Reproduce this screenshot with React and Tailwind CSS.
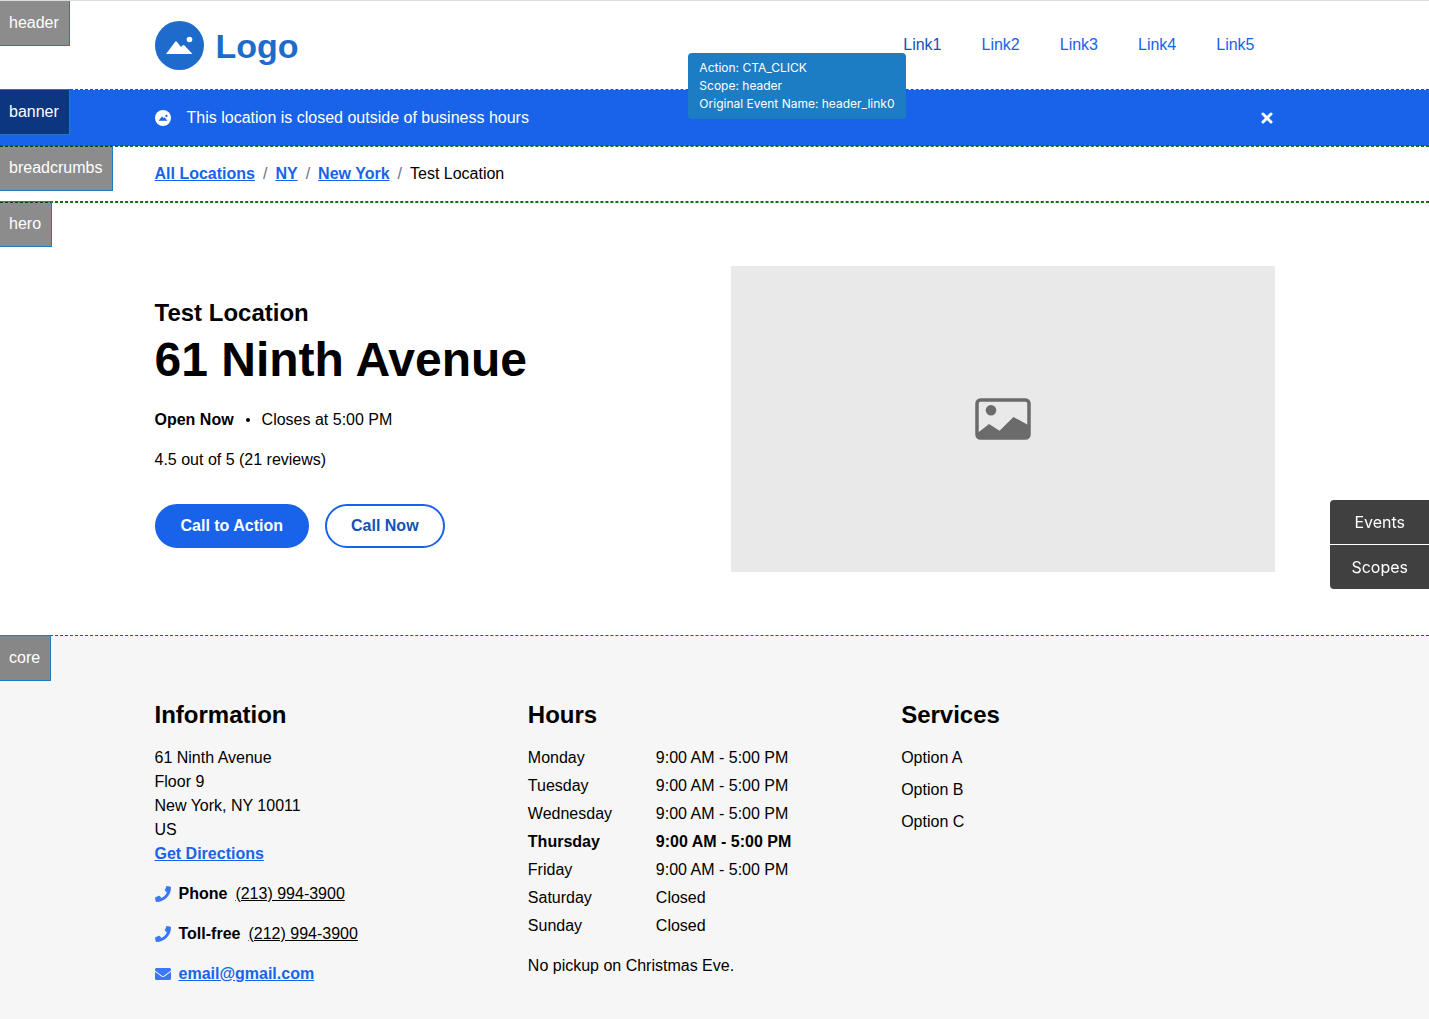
import { FaEnvelope, FaPhone } from 'react-icons/fa'

const links = ['Link1', 'Link2', 'Link3', 'Link4', 'Link5']

const breadcrumbs = ['All Locations', 'NY', 'New York']

const hours = [
  { day: 'Monday', time: '9:00 AM - 5:00 PM' },
  { day: 'Tuesday', time: '9:00 AM - 5:00 PM' },
  { day: 'Wednesday', time: '9:00 AM - 5:00 PM' },
  { day: 'Thursday', time: '9:00 AM - 5:00 PM', today: true },
  { day: 'Friday', time: '9:00 AM - 5:00 PM' },
  { day: 'Saturday', time: 'Closed' },
  { day: 'Sunday', time: 'Closed' },
]

const services = ['Option A', 'Option B', 'Option C']

function Container({ className = '', children }) {
  return <div className={`max-w-6xl mx-auto px-4 ${className}`}>{children}</div>
}

function ScopeLabel({ name, className = '-top-px border-t' }) {
  return (
    <span className={`absolute -left-0.5 border-x border-b border-[#1c7dc4] bg-black/45 p-2.5 text-white ${className}`}>
      {name}
    </span>
  )
}

function LogoMark() {
  return (
    <svg viewBox="0 0 49 49" className="w-[49px] h-[49px]" aria-hidden="true">
      <circle cx="24.5" cy="24.5" r="24.5" fill="#1e6bcb" />
      <path d="M11 33 20 21q1-1.300 2 0L26 26l1.700-1.700q.9-.8 1.800.1L37.500 33z" fill="#fff" />
      <circle cx="34.500" cy="18.500" r="2.800" fill="#fff" />
    </svg>
  )
}

function BannerIcon() {
  return (
    <svg viewBox="0 0 49 49" className="w-4 h-4" aria-hidden="true">
      <circle cx="24.5" cy="24.5" r="24.5" fill="#fff" />
      <path d="M11 33 20.500 20.500q1-1.200 2 0L26 25.500l2.200-2.300q.9-.8 1.800.1L38 33z" fill="#1863ea" />
      <circle cx="35" cy="18" r="3.500" fill="#1863ea" />
    </svg>
  )
}

function CloseIcon() {
  return (
    <svg viewBox="0 0 12 12" className="w-3 h-3" aria-hidden="true">
      <path d="M2 2l8 8M10 2l-8 8" stroke="#fff" strokeWidth="3" strokeLinecap="round" />
    </svg>
  )
}

function ImagePlaceholder() {
  return (
    <svg viewBox="0 0 56 42" className="w-14 h-[42px]" role="img" aria-label="Placeholder image">
      <rect x="2" y="2" width="52" height="38" rx="3.500" fill="none" stroke="#6b6b6b" strokeWidth="3.500" />
      <circle cx="16" cy="12.300" r="5.300" fill="#6b6b6b" />
      <path d="M2 35.500 14 26l10.500 6.800L38.500 19 54 27.500V38q0 2-2 2H4q-2 0-2-2z" fill="#6b6b6b" />
    </svg>
  )
}

function Header() {
  return (
    <header className="relative border-t border-t-[#dcdcdc] border-b border-b-[#0a750a] [border-bottom-style:dashed]">
      <ScopeLabel name="header" className="top-0" />
      <Container className="flex items-center justify-between pt-5 pb-[19px]">
        <a href="#" className="flex items-center gap-3 text-[#1e6bcb]">
          <LogoMark />
          <span className="text-[34px] leading-[48px] font-bold">Logo</span>
        </a>
        <nav className="flex gap-10 pr-5 pb-px">
          {links.map((link, i) => (
            <div key={link} className="relative">
              <a href="#" className={i === 0 ? 'text-[#1552b8]' : 'text-[#1863ea]'}>{link}</a>
              {i === 0 && (
                <div
                  role="tooltip"
                  className="absolute z-10 top-5 right-9 rounded-sm bg-[#1c7dc4] px-[11px] py-1.5 font-['Inter'] text-xs leading-[18px] text-white whitespace-nowrap"
                >
                  <p>Action: CTA_CLICK</p>
                  <p>Scope: header</p>
                  <p>Original Event Name: header_link0</p>
                </div>
              )}
            </div>
          ))}
        </nav>
      </Container>
    </header>
  )
}

function Banner() {
  return (
    <section className="relative bg-[#1863ea] text-white border-b border-dashed border-[#0a750a]">
      <ScopeLabel name="banner" />
      <Container className="flex items-center py-4">
        <BannerIcon />
        <p className="ml-4 leading-[23px]">This location is closed outside of business hours</p>
        <button className="ml-auto p-0.5" aria-label="Close banner">
          <CloseIcon />
        </button>
      </Container>
    </section>
  )
}

function Breadcrumbs() {
  return (
    <nav className="relative border-y border-dashed border-[#0a750a]" aria-label="Breadcrumb">
      <ScopeLabel name="breadcrumbs" className="-top-px" />
      <Container className="py-[15px]">
        <ol className="flex">
          {breadcrumbs.map((crumb) => (
            <li key={crumb}>
              <a href="#" className="font-bold text-[#1863ea] underline">{crumb}</a>
              <span className="mx-2 text-gray-500">/</span>
            </li>
          ))}
          <li>Test Location</li>
        </ol>
      </Container>
    </nav>
  )
}

function Hero() {
  return (
    <section className="relative border-y border-dashed border-[#0a750a]">
      <ScopeLabel name="hero" className="-top-0.5 border-t" />
      <Container className="grid grid-cols-2 gap-8 py-[63px] items-center">
        <div className="pt-2">
          <p className="text-2xl leading-[30px] font-bold">Test Location</p>
          <h1 className="text-5xl leading-16 font-bold">61 Ninth Avenue</h1>
          <p className="mt-4 flex items-center">
            <span className="font-bold">Open Now</span>
            <span className="mx-3 w-1 h-1 rounded-full bg-black" />
            <span>Closes at 5:00 PM</span>
          </p>
          <p className="mt-4">4.5 out of 5 (21 reviews)</p>
          <div className="mt-8 flex gap-4">
            <button className="rounded-full border-2 border-[#1863ea] bg-[#1863ea] px-6 py-2 font-bold text-white">
              Call to Action
            </button>
            <button className="rounded-full border-2 border-[#1863ea] px-6 py-2 font-bold text-[#1552b8]">
              Call Now
            </button>
          </div>
        </div>
        <div className="aspect-video flex items-center justify-center bg-[#e9e9e9]">
          <ImagePlaceholder />
        </div>
      </Container>
    </section>
  )
}

function PhoneRow({ label, number }) {
  return (
    <p className="mt-4 flex items-center gap-2">
      <FaPhone size={16} className="text-[#3b78f5]" />
      <span className="font-bold">{label}</span>
      <a href="#" className="underline">{number}</a>
    </p>
  )
}

function Core() {
  return (
    <section className="relative bg-[#f6f6f6]">
      <ScopeLabel name="core" />
      <Container className="grid grid-cols-3 py-16">
        <div>
          <h2 className="mb-4 text-2xl leading-[30px] font-bold">Information</h2>
          <address className="not-italic">
            <p>61 Ninth Avenue</p>
            <p>Floor 9</p>
            <p>New York, NY 10011</p>
            <p>US</p>
          </address>
          <a href="#" className="font-bold text-[#1863ea] underline">Get Directions</a>
          <PhoneRow label="Phone" number="(213) 994-3900" />
          <PhoneRow label="Toll-free" number="(212) 994-3900" />
          <p className="mt-4 flex items-center gap-2">
            <FaEnvelope size={16} className="text-[#3b78f5]" />
            <a href="#" className="font-bold text-[#1863ea] underline">email@gmail.com</a>
          </p>
        </div>
        <div>
          <h2 className="mb-4 text-2xl leading-[30px] font-bold">Hours</h2>
          <table>
            <tbody>
              {hours.map(({ day, time, today }) => (
                <tr key={day} className={today ? 'font-bold' : ''}>
                  <td className="w-32 pb-1">{day}</td>
                  <td className="pb-1">{time}</td>
                </tr>
              ))}
            </tbody>
          </table>
          <p className="mt-3">No pickup on Christmas Eve.</p>
        </div>
        <div>
          <h2 className="mb-4 text-2xl leading-[30px] font-bold">Services</h2>
          <ul className="flex flex-col gap-2">
            {services.map((service) => (
              <li key={service}>{service}</li>
            ))}
          </ul>
        </div>
      </Container>
    </section>
  )
}

export default function App() {
  return (
    <div className="relative overflow-x-hidden bg-white font-['Liberation_Sans',Arial,sans-serif] text-base text-black">
      <Header />
      <Banner />
      <Breadcrumbs />
      <Hero />
      <Core />

      {/* Debug panel toggles, pinned to the right edge */}
      <div className="fixed right-0 top-[500px] flex flex-col gap-px rounded-l overflow-hidden font-['Inter']">
        <button className="bg-[#404040] px-[21px] py-2.5 text-white">Events</button>
        <button className="bg-[#404040] px-[21px] py-2.5 text-white">Scopes</button>
      </div>
    </div>
  )
}
